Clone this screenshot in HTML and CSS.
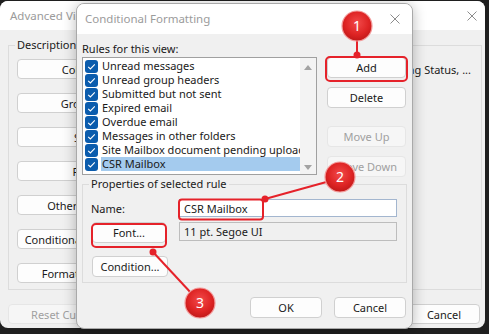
FILE: index.html
```html
<!DOCTYPE html>
<html>
<head>
<meta charset="utf-8">
<link rel="stylesheet" href="styles.css">
</head>
<body>
<div class="desktop">
  <div class="win bgwin">
    <div class="titlebar">
      <span class="title">Advanced View Settings: Compact</span>
      <svg class="close" viewBox="0 0 10 10"><path d="M0.5 0.5 L9.5 9.5 M9.5 0.5 L0.5 9.5" stroke="#8c8c8c" stroke-width="1" fill="none"/></svg>
    </div>
    <div class="bgbody">
      <fieldset class="group desc">
        <legend>Description</legend>
        <div class="rows">
          <div class="descrow"><div class="btn wide">Columns...</div><span class="desctext">Importance, Reminder, Icon, Flag Status, ...</span></div>
          <div class="descrow"><div class="btn wide">Group By...</div><span class="desctext"></span></div>
          <div class="descrow"><div class="btn wide">Sort...</div><span class="desctext"></span></div>
          <div class="descrow"><div class="btn wide">Filter...</div><span class="desctext"></span></div>
          <div class="descrow"><div class="btn wide">Other Settings...</div><span class="desctext"></span></div>
          <div class="descrow"><div class="btn wide">Conditional Formatting...</div><span class="desctext"></span></div>
          <div class="descrow"><div class="btn wide">Format Columns...</div><span class="desctext"></span></div>
        </div>
      </fieldset>
      <div class="bgfooter">
        <div class="btn wide disabled">Reset Current View</div>
        <div class="spacer"></div>
        <div class="btn std">OK</div>
        <div class="btn std">Cancel</div>
      </div>
    </div>
  </div>

  <div class="win dialog">
    <div class="titlebar">
      <span class="title">Conditional Formatting</span>
      <svg class="close" viewBox="0 0 10 10"><path d="M0.5 0.5 L9.5 9.5 M9.5 0.5 L0.5 9.5" stroke="#8c8c8c" stroke-width="1" fill="none"/></svg>
    </div>
    <div class="dbody">
      <div class="label">Rules for this view:</div>
      <div class="toprow">
        <div class="listbox">
          <div class="items">
            <div class="item"><svg class="cb" viewBox="0 0 13 13"><rect width="13" height="13" rx="3" fill="#0b5cad"/><path d="M3.2 6.8 L5.4 9 L9.8 4.4" stroke="#fff" stroke-width="1.1" fill="none"/></svg><span class="itext">Unread messages</span></div>
            <div class="item"><svg class="cb" viewBox="0 0 13 13"><rect width="13" height="13" rx="3" fill="#0b5cad"/><path d="M3.2 6.8 L5.4 9 L9.8 4.4" stroke="#fff" stroke-width="1.1" fill="none"/></svg><span class="itext">Unread group headers</span></div>
            <div class="item"><svg class="cb" viewBox="0 0 13 13"><rect width="13" height="13" rx="3" fill="#0b5cad"/><path d="M3.2 6.8 L5.4 9 L9.8 4.4" stroke="#fff" stroke-width="1.1" fill="none"/></svg><span class="itext">Submitted but not sent</span></div>
            <div class="item"><svg class="cb" viewBox="0 0 13 13"><rect width="13" height="13" rx="3" fill="#0b5cad"/><path d="M3.2 6.8 L5.4 9 L9.8 4.4" stroke="#fff" stroke-width="1.1" fill="none"/></svg><span class="itext">Expired email</span></div>
            <div class="item"><svg class="cb" viewBox="0 0 13 13"><rect width="13" height="13" rx="3" fill="#0b5cad"/><path d="M3.2 6.8 L5.4 9 L9.8 4.4" stroke="#fff" stroke-width="1.1" fill="none"/></svg><span class="itext">Overdue email</span></div>
            <div class="item"><svg class="cb" viewBox="0 0 13 13"><rect width="13" height="13" rx="3" fill="#0b5cad"/><path d="M3.2 6.8 L5.4 9 L9.8 4.4" stroke="#fff" stroke-width="1.1" fill="none"/></svg><span class="itext">Messages in other folders</span></div>
            <div class="item"><svg class="cb" viewBox="0 0 13 13"><rect width="13" height="13" rx="3" fill="#0b5cad"/><path d="M3.2 6.8 L5.4 9 L9.8 4.4" stroke="#fff" stroke-width="1.1" fill="none"/></svg><span class="itext">Site Mailbox document pending upload</span></div>
            <div class="item sel"><svg class="cb" viewBox="0 0 13 13"><rect width="13" height="13" rx="3" fill="#0b5cad"/><path d="M3.2 6.8 L5.4 9 L9.8 4.4" stroke="#fff" stroke-width="1.1" fill="none"/></svg><span class="itext">CSR Mailbox</span></div>
          </div>
          <div class="scroll">
            <span class="arrow-up"></span>
            <span class="arrow-down"></span>
          </div>
        </div>
        <div class="btncol">
          <div class="btn">Add</div>
          <div class="btn">Delete</div>
          <div class="btn disabled gap">Move Up</div>
          <div class="btn disabled">Move Down</div>
        </div>
      </div>
      <fieldset class="group props">
        <legend>Properties of selected rule</legend>
        <div class="inner">
          <div class="namerow">
            <span class="namelabel">Name:</span>
            <div class="input">CSR Mailbox</div>
          </div>
          <div class="fontrow">
            <div class="btn fontbtn">Font...</div>
            <div class="infobox">11 pt. Segoe UI</div>
          </div>
          <div class="condrow">
            <div class="btn condbtn">Condition...</div>
          </div>
        </div>
      </fieldset>
      <div class="dfooter">
        <div class="btn std">OK</div>
        <div class="btn std">Cancel</div>
      </div>
    </div>
  </div>

  <svg class="callouts" width="489" height="334" viewBox="0 0 489 334">
    <defs>
      <radialGradient id="rg" cx="50%" cy="40%" r="60%">
        <stop offset="0%" stop-color="#f24a4a"/>
        <stop offset="65%" stop-color="#de2424"/>
        <stop offset="100%" stop-color="#c01818"/>
      </radialGradient>
    </defs>
    <g fill="none" stroke="#e5222a" stroke-width="2">
      <rect x="326" y="57" width="81" height="24" rx="4"/>
      <rect x="179" y="199.5" width="84" height="20" rx="3"/>
      <rect x="92" y="224" width="74" height="23" rx="4"/>
      <line x1="357" y1="40" x2="357" y2="55"/>
      <line x1="265" y1="199" x2="330" y2="181"/>
      <line x1="153" y1="252" x2="192" y2="294"/>
    </g>
    <g fill="#e5222a">
      <circle cx="357" cy="55" r="3.5"/>
      <circle cx="265" cy="199" r="3.5"/>
      <circle cx="153" cy="252" r="3.5"/>
    </g>
    <g fill="url(#rg)" stroke="#f39a9a" stroke-width="1.2">
      <circle cx="357" cy="26" r="15"/>
      <circle cx="340" cy="177" r="15"/>
      <circle cx="200" cy="303" r="15"/>
    </g>
    <g class="num" fill="#fff" text-anchor="middle">
      <text x="357" y="31">1</text>
      <text x="340" y="182">2</text>
      <text x="200" y="308">3</text>
    </g>
  </svg>
</div>
</body>
</html>
```

FILE: styles.css
```css
* { box-sizing: border-box; }
html, body { margin: 0; padding: 0; }
body {
  width: 489px;
  height: 334px;
  overflow: hidden;
  background: #1f1f1f;
  font-family: "Noto Sans", "Open Sans", sans-serif;
  font-size: 11px;
  color: #1a1a1a;
}
.desktop { position: relative; width: 489px; height: 334px; }

.win {
  position: absolute;
  display: flex;
  flex-direction: column;
  overflow: hidden;
  border-radius: 8px;
  background: #f0f0f0;
}
.bgwin { left: 0; top: 1px; width: 485px; height: 327px; }
.dialog {
  left: 76px;
  top: 3px;
  width: 337px;
  height: 326px;
  border: 1px solid #a9a9a9;
  box-shadow: 0 2px 14px rgba(0, 0, 0, 0.28);
}

.titlebar {
  flex: none;
  display: flex;
  align-items: center;
  justify-content: space-between;
  background: #fff;
}
.bgwin .titlebar { height: 29px; padding: 0 8px 0 10px; }
.dialog .titlebar { height: 30px; padding: 0 12px 1px 8px; }
.title { font-size: 11.5px; color: #9b9b9b; white-space: nowrap; }
.close { width: 10px; height: 10px; display: block; flex: none; }

.btn {
  height: 21px;
  display: flex;
  align-items: center;
  justify-content: center;
  background: #fdfdfd;
  border: 1px solid #d0d0d0;
  border-radius: 4px;
  white-space: nowrap;
  overflow: hidden;
  flex: none;
}
.btn.disabled { background: #f6f6f6; border-color: #e6e6e6; color: #a0a0a0; }
.btn.std { width: 72px; }

fieldset.group {
  margin: 0;
  padding: 0;
  min-width: 0;
  border: 1px solid #dcdcdc;
}
fieldset.group legend {
  padding: 0 2px;
  margin-left: 6px;
  line-height: 14px;
}

/* background window */
.bgbody {
  flex: 1;
  display: flex;
  flex-direction: column;
  padding: 8px 3px 0 8px;
}
.desc .rows {
  display: flex;
  flex-direction: column;
  gap: 14px;
  padding: 7px 0 6px 8px;
}
.descrow { display: flex; align-items: center; height: 20px; }
.btn.wide { width: 144px; height: 20px; }
.desctext {
  flex: 1;
  text-align: right;
  padding-right: 10px;
  white-space: nowrap;
  overflow: hidden;
}
.bgfooter {
  display: flex;
  gap: 6px;
  margin-top: 14px;
  padding-right: 2px;
}
.bgfooter .btn { height: 20px; }
.spacer { flex: 1; }

/* dialog */
.dbody {
  flex: 1;
  display: flex;
  flex-direction: column;
  padding: 7px 5px 0 5px;
}
.label { line-height: 16px; }
.toprow { display: flex; align-items: flex-start; gap: 10px; }
.listbox {
  width: 235px;
  height: 118px;
  border: 1px solid #a0a0a0;
  background: #fff;
  display: flex;
  flex: none;
}
.items { flex: 1; min-width: 0; overflow: hidden; padding-top: 1px; }
.item {
  display: flex;
  align-items: center;
  height: 14px;
  padding-left: 2px;
  white-space: nowrap;
}
.cb { width: 13px; height: 13px; display: block; flex: none; }
.itext { margin-left: 3px; padding-left: 1px; line-height: 14px; flex: 1 0 auto; }
.item.sel .itext { background: #a4cbee; }
.scroll {
  width: 16px;
  flex: none;
  background: #f3f3f3;
  display: flex;
  flex-direction: column;
  justify-content: space-between;
  align-items: center;
  padding: 7px 0 4px;
}
.arrow-up, .arrow-down {
  width: 0;
  height: 0;
  border-left: 4px solid transparent;
  border-right: 4px solid transparent;
}
.arrow-up { border-bottom: 5px solid #a3a3a3; }
.arrow-down { border-top: 5px solid #a3a3a3; }

.btncol { display: flex; flex-direction: column; width: 79px; flex: none; }
.btncol .btn + .btn { margin-top: 9px; }
.btncol .btn.gap { margin-top: 18px; }

.props { margin-top: 3px; }
.props .inner {
  display: flex;
  flex-direction: column;
  padding: 8px 8px 5px 8px;
}
.namerow { display: flex; align-items: center; height: 18px; }
.namelabel { width: 88px; flex: none; }
.input {
  width: 218px;
  height: 18px;
  border: 1px solid #a3b6cf;
  background: #fff;
  padding-left: 4px;
  display: flex;
  align-items: center;
  white-space: nowrap;
}
.fontrow { display: flex; align-items: flex-start; margin-top: 5px; }
.fontbtn { width: 74px; margin-left: 1px; }
.infobox {
  width: 218px;
  height: 19px;
  margin-left: 13px;
  border: 1px solid #bdbdbd;
  background: #f0f0f0;
  padding-left: 4px;
  display: flex;
  align-items: center;
  white-space: nowrap;
}
.condrow { display: flex; margin-top: 13px; }
.condbtn { width: 76px; margin-left: 1px; }

.dfooter {
  display: flex;
  justify-content: flex-end;
  gap: 12px;
  margin-top: 14px;
  padding-right: 1px;
}

.callouts {
  position: absolute;
  left: 0;
  top: 0;
  pointer-events: none;
}
.num text { font-family: "Noto Sans", sans-serif; font-size: 14px; }
```
